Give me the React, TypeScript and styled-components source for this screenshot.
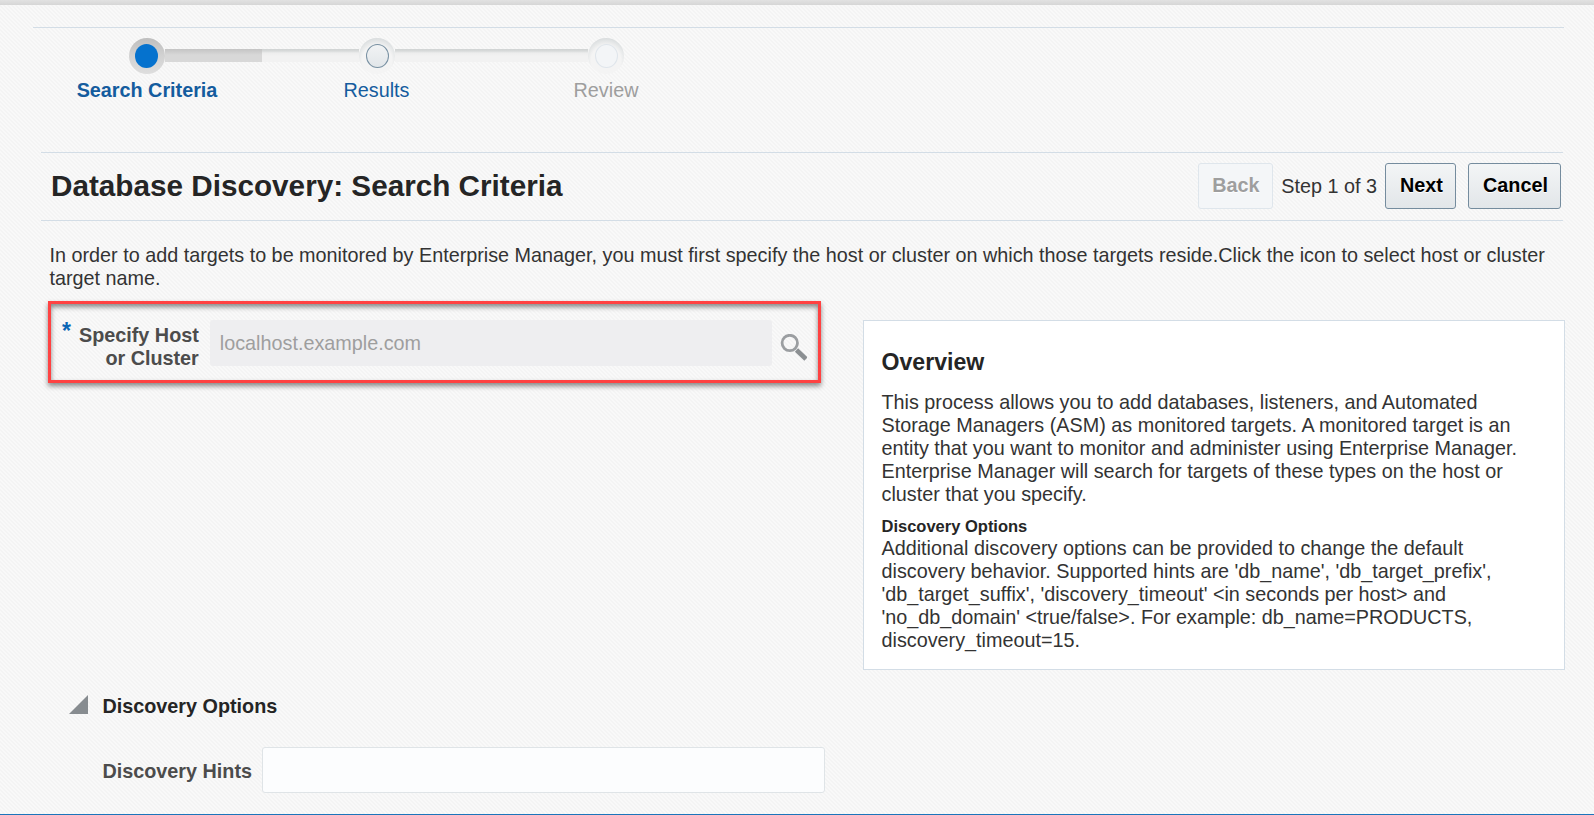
import React from 'react';
import styled, { createGlobalStyle, css } from 'styled-components';

const GlobalStyle = createGlobalStyle`
  * { box-sizing: border-box; }
  body { margin: 0; background: #f7f7f7; }
`;

const Page = styled.div`
  width: 1594px;
  height: 815px;
  display: flex;
  flex-direction: column;
  overflow: hidden;
  border-bottom: 1px solid #1b75bb;
  font: 19.8px/23px 'Liberation Sans', Arial, sans-serif;
  color: #333;
  background: repeating-linear-gradient(45deg, #f4f4f4 0 1.414px, #f9f9f9 1.414px 2.828px);
`;

const TopBar = styled.div`
  height: 5px;
  flex: none;
  background: linear-gradient(#e2e2e2, #d6d6d6);
`;

const Train = styled.nav`
  display: flex;
  height: 125px;
  flex: none;
  margin: 22px 30px 0 33px;
  border-top: 1px solid #d3dde6;
`;

type StopState = 'current' | 'next' | 'disabled';

const Stop = styled.div`
  display: flex;
  flex-direction: column;
  align-items: center;
  width: 230px;
  padding-top: 10px;
  &:first-child { margin-left: -1px; }
  &:nth-child(2) { width: 229px; }
`;

const TrackRow = styled.div`
  display: flex;
  align-items: center;
  width: 100%;
  height: 36px;
`;

const trackFill = {
  done: 'linear-gradient(#c4c4c4, #d8d8d8 6px)',
  open: 'linear-gradient(#d0d3d3, #d8dada 2px, #ededed 4px, #f2f2f2 7px)',
  none: 'transparent',
};

const Track = styled.div<{ $kind: keyof typeof trackFill }>`
  flex: 1;
  height: 13px;
  margin-top: -1px;
  background: ${p => trackFill[p.$kind]};
`;

const Ring = styled.div<{ $state: StopState }>`
  width: 36px;
  height: 36px;
  padding-left: ${p => (p.$state === 'current' ? 6 : 7)}px;
  border-radius: 50%;
  display: flex;
  align-items: center;
  background: ${p => p.$state === 'current'
    ? 'linear-gradient(#bebebe, #d2d2d2 50%, #dedede)'
    : 'radial-gradient(circle at 50% 62%, #f4f4f4 52%, #dfe2e3 72%, #cbcfd1 90%)'};
`;

const Dot = styled.div<{ $state: StopState }>`
  width: 23px;
  height: 24px;
  border-radius: 50%;
  ${p => p.$state === 'current' && css`background: #0572ce;`}
  ${p => p.$state === 'next' && css`background: linear-gradient(#f1f3f4, #e2e6e9); border: 1px solid #7890a2;`}
  ${p => p.$state === 'disabled' && css`background: #f3f5f7; border: 1px solid #dfe5eb;`}
`;

const StopLabel = styled.div<{ $state: StopState }>`
  margin-top: 5px;
  color: ${p => (p.$state === 'disabled' ? '#9e9e9e' : '#145c9e')};
  font-weight: ${p => (p.$state === 'current' ? 700 : 400)};
`;

const TitleBar = styled.header`
  display: flex;
  align-items: center;
  height: 69px;
  flex: none;
  margin: 0 31px 0 41px;
  padding: 0 2px 2px 10px;
  border: solid #d3dde6;
  border-width: 1px 0;
`;

const Title = styled.h1`
  flex: 1;
  margin: 0;
  font-size: 29.7px;
  line-height: 34px;
  color: #252525;
`;

const StepText = styled.span`
  margin: 2px 8px 0 8px;
  white-space: nowrap;
`;

const Button = styled.button<{ $width: number }>`
  width: ${p => p.$width}px;
  height: 46px;
  padding: 0 0 0 2px;
  border: 1px solid #758c9e;
  border-radius: 3px;
  font: bold 19.8px/23px 'Liberation Sans', Arial, sans-serif;
  color: #000;
  background: linear-gradient(#f3f5f6, #e2e6e9);
  text-shadow: 0 1px 0 #fff;
  & + & { margin-left: 12px; }
  &:disabled {
    padding-left: 0;
    color: #9e9e9e;
    border-color: #dfe6ec;
    background: #f4f6f8;
  }
`;

const Intro = styled.p`
  margin: 23px 30px 0 49.5px;
  flex: none;
`;

const Columns = styled.div`
  display: flex;
  justify-content: space-between;
  align-items: flex-start;
  flex: none;
  margin: 11px 29px 0 48px;
`;

const HostField = styled.div`
  display: flex;
  align-items: flex-start;
  width: 773px;
  height: 82px;
  padding: 16px 11px 0 11px;
  border: 3px solid #ff4242;
  box-shadow: 0 3px 5px rgba(0, 0, 0, 0.45), inset 0 3px 5px rgba(0, 0, 0, 0.45);
`;

const Required = styled.span`
  width: 10px;
  color: #0b66b5;
  font: bold 23px/20px 'Liberation Sans', Arial, sans-serif;
  padding-top: 1px;
`;

const HostLabel = styled.label`
  width: 127px;
  padding: 4px 0 0;
  margin-right: 11px;
  text-align: right;
  font-weight: 700;
  color: #4c4c4c;
`;

const HostInput = styled.div`
  width: 563px;
  height: 46px;
  padding: 12px 10px;
  border-radius: 3px;
  background: #eeeef0;
  color: #9e9e9e;
`;

const LensIcon = styled.svg`
  width: 27px;
  height: 27px;
  margin: 14px 0 0 8px;
`;

const Overview = styled.section`
  width: 702px;
  height: 350px;
  margin-top: 19px;
  padding: 28px 17px 0 17.5px;
  border: 1px solid #d3dde6;
  background: #fff;
`;

const OverviewTitle = styled.h2`
  margin: 0 0 16px;
  font-size: 23.1px;
  line-height: 26px;
  color: #252525;
`;

const OverviewSubtitle = styled.h3`
  margin: 10px 0 0;
  font-size: 16.5px;
  line-height: 21px;
  color: #252525;
`;

const Copy = styled.p`
  margin: 0;
`;

const OptionsHeader = styled.div`
  display: flex;
  align-items: center;
  height: 23px;
  margin: 25px 0 0 69px;
  font-weight: 700;
  color: #252525;
`;

const Disclosure = styled.svg`
  width: 19px;
  height: 19px;
  margin: 0 14.5px 4px 0;
`;

const HintsRow = styled.div`
  display: flex;
  align-items: center;
  margin: 29px 0 0 102.5px;
`;

const HintsLabel = styled.label`
  width: 159.5px;
  padding-top: 2px;
  font-weight: 700;
  color: #4c4c4c;
`;

const HintsInput = styled.input`
  width: 563px;
  height: 46px;
  border: 1px solid #dfe4e7;
  border-radius: 3px;
  background: #fcfdfe;
`;

type TrackKind = keyof typeof trackFill;

const stops: { label: string; state: StopState; left: TrackKind; right: TrackKind }[] = [
  { label: 'Search Criteria', state: 'current', left: 'none', right: 'done' },
  { label: 'Results', state: 'next', left: 'open', right: 'open' },
  { label: 'Review', state: 'disabled', left: 'open', right: 'none' },
];

export default function App() {
  return (
    <>
      <GlobalStyle />
      <Page>
        <TopBar />
        <Train>
          {stops.map(s => (
            <Stop key={s.label}>
              <TrackRow>
                <Track $kind={s.left} />
                <Ring $state={s.state}><Dot $state={s.state} /></Ring>
                <Track $kind={s.right} />
              </TrackRow>
              <StopLabel $state={s.state}>{s.label}</StopLabel>
            </Stop>
          ))}
        </Train>
        <TitleBar>
          <Title>Database Discovery: Search Criteria</Title>
          <Button $width={75} disabled>Back</Button>
          <StepText>Step 1 of 3</StepText>
          <Button $width={71}>Next</Button>
          <Button $width={93}>Cancel</Button>
        </TitleBar>
        <Intro>
          In order to add targets to be monitored by Enterprise Manager, you must first specify the
          host or cluster on which those targets reside.Click the icon to select host or cluster
          <br />target name.
        </Intro>
        <Columns>
          <HostField>
            <Required>*</Required>
            <HostLabel>Specify Host<br />or Cluster</HostLabel>
            <HostInput>localhost.example.com</HostInput>
            <LensIcon viewBox="0 0 27 27" fill="none">
              <circle cx="9.8" cy="9" r="7.7" stroke="#9b9ea1" strokeWidth="2.8" />
              <path d="M16.5 16L26 25" stroke="#8b8f92" strokeWidth="4.6" />
            </LensIcon>
          </HostField>
          <Overview>
            <OverviewTitle>Overview</OverviewTitle>
            <Copy>
              This process allows you to add databases, listeners, and Automated<br />
              Storage Managers (ASM) as monitored targets. A monitored target is an<br />
              entity that you want to monitor and administer using Enterprise Manager.<br />
              Enterprise Manager will search for targets of these types on the host or<br />
              cluster that you specify.
            </Copy>
            <OverviewSubtitle>Discovery Options</OverviewSubtitle>
            <Copy>
              Additional discovery options can be provided to change the default<br />
              discovery behavior. Supported hints are 'db_name', 'db_target_prefix',<br />
              'db_target_suffix', 'discovery_timeout' &lt;in seconds per host&gt; and<br />
              'no_db_domain' &lt;true/false&gt;. For example: db_name=PRODUCTS,<br />
              discovery_timeout=15.
            </Copy>
          </Overview>
        </Columns>
        <OptionsHeader>
          <Disclosure viewBox="0 0 19 19"><path d="M0 19L19 0V19Z" fill="#878c90" /></Disclosure>
          Discovery Options
        </OptionsHeader>
        <HintsRow>
          <HintsLabel>Discovery Hints</HintsLabel>
          <HintsInput />
        </HintsRow>
      </Page>
    </>
  );
}
